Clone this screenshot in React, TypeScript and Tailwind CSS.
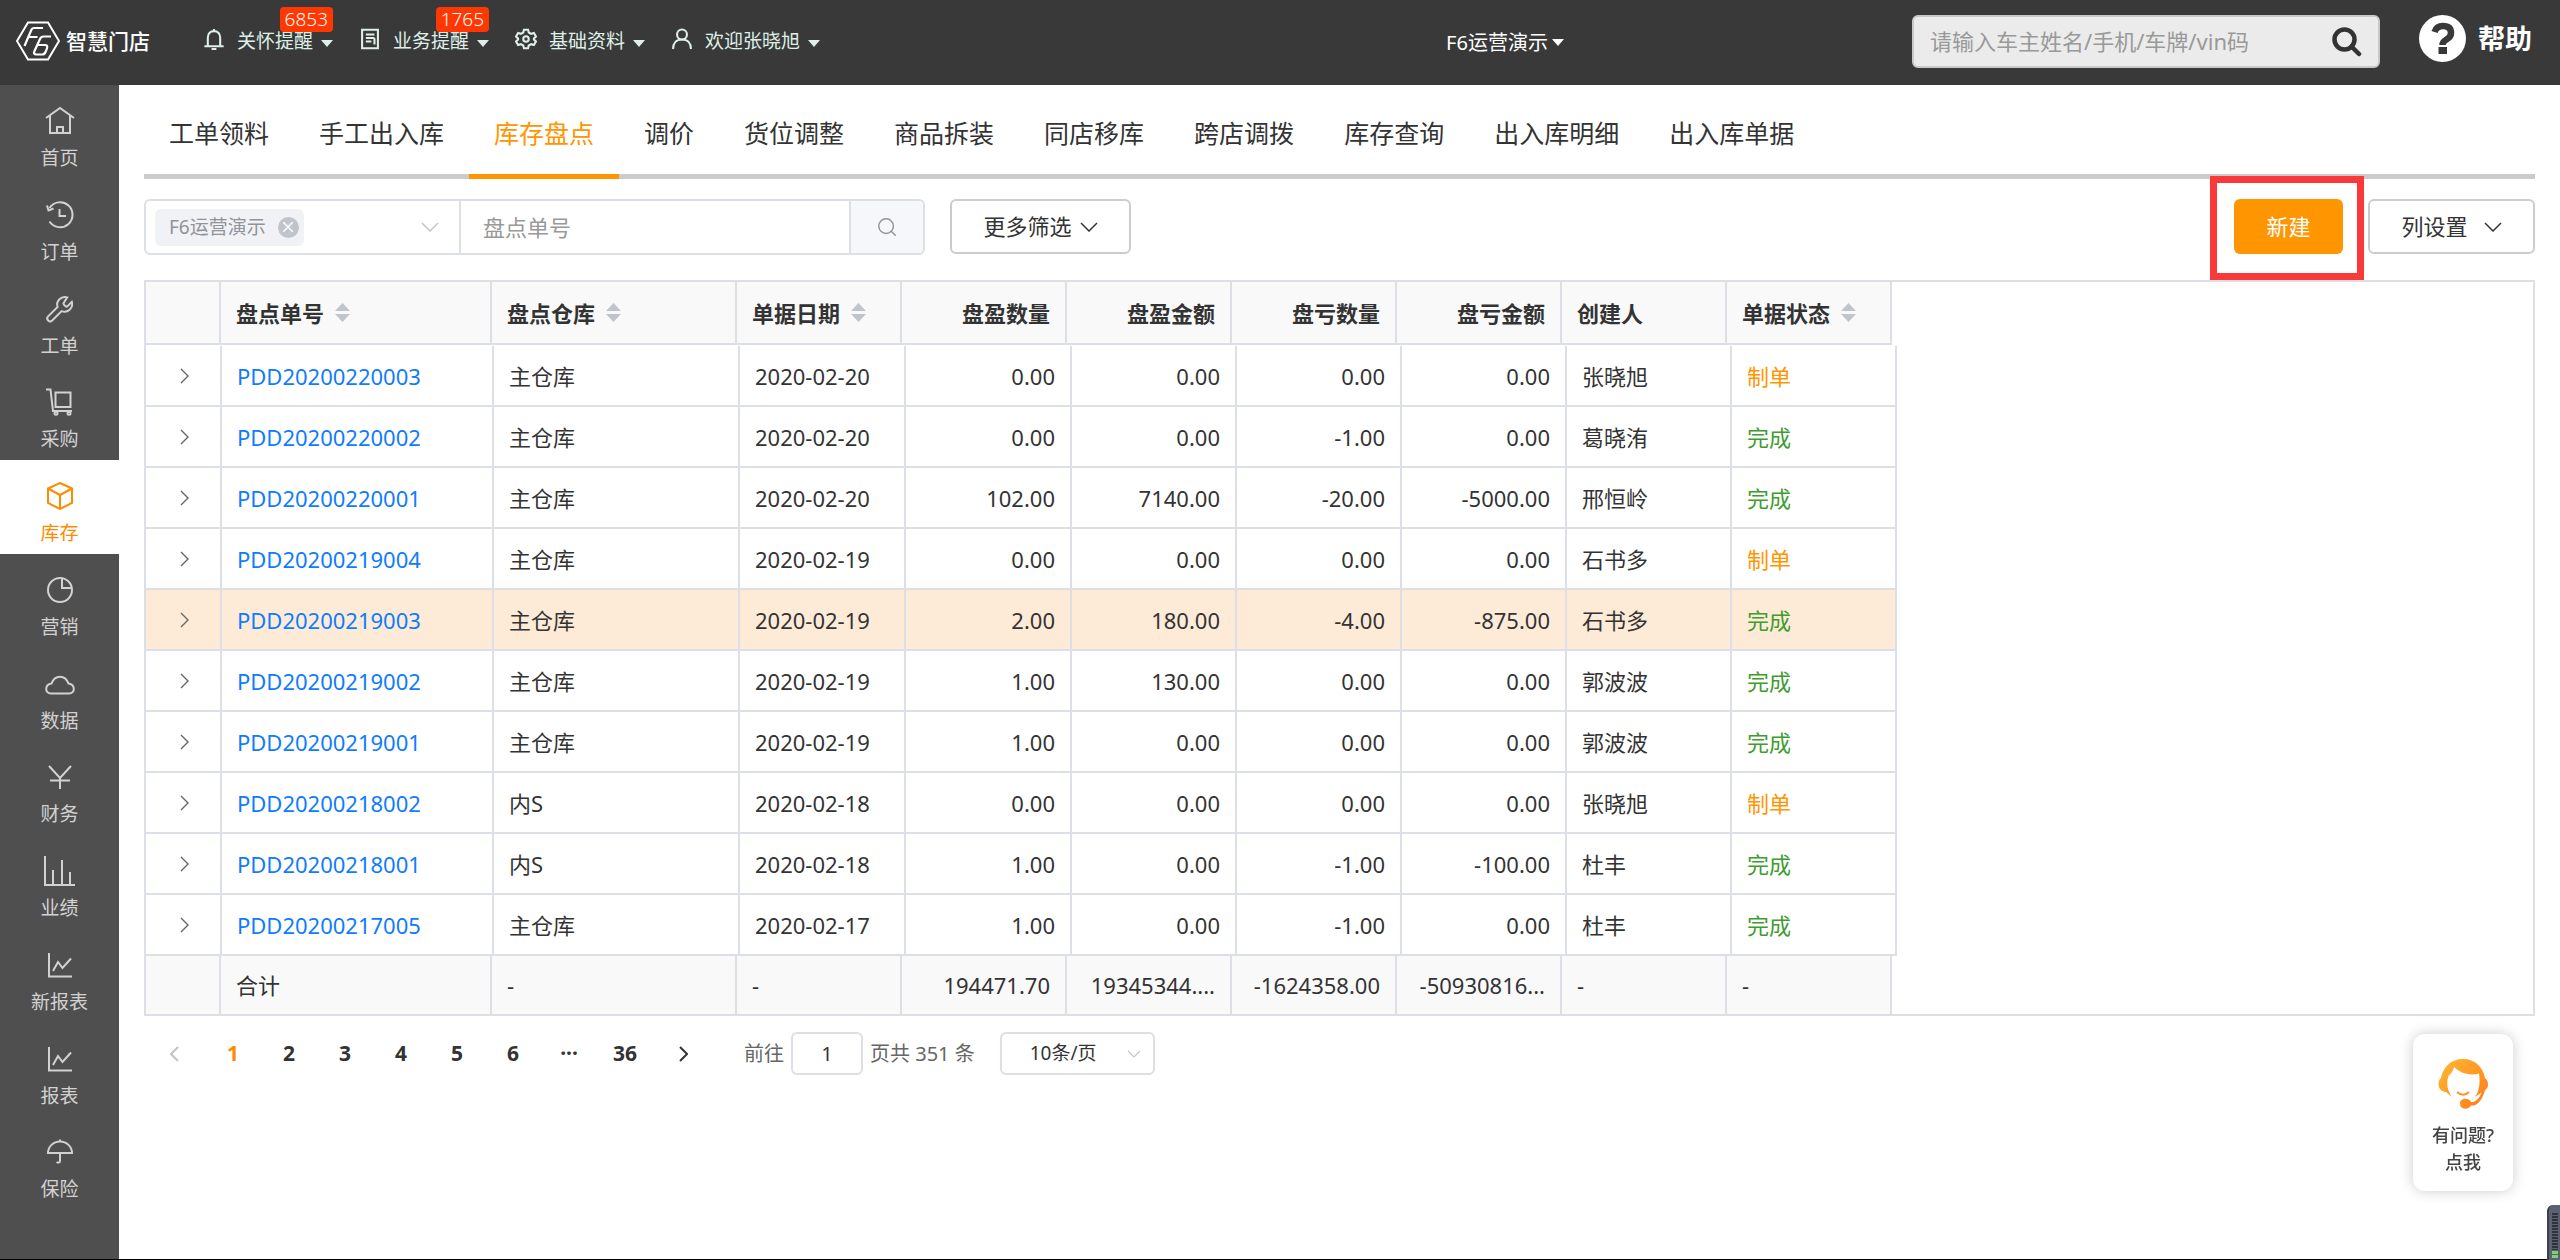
import clsx from "clsx";
import { Search } from "lucide-react";
import { useState } from "react";
import type { ReactNode } from "react";

const topMenus = [
  { icon: "bell", label: "关怀提醒", badge: "6853" },
  { icon: "doc", label: "业务提醒", badge: "1765" },
  { icon: "gear", label: "基础资料" },
  { icon: "user", label: "欢迎张晓旭" },
];

const sideMenus = [
  { icon: "home", label: "首页" },
  { icon: "history", label: "订单" },
  { icon: "wrench", label: "工单" },
  { icon: "cart", label: "采购" },
  { icon: "box", label: "库存" },
  { icon: "pie", label: "营销" },
  { icon: "cloud", label: "数据" },
  { icon: "yen", label: "财务" },
  { icon: "bars", label: "业绩" },
  { icon: "trend", label: "新报表" },
  { icon: "trend", label: "报表" },
  { icon: "umbrella", label: "保险" },
];

const tabs = [
  "工单领料",
  "手工出入库",
  "库存盘点",
  "调价",
  "货位调整",
  "商品拆装",
  "同店移库",
  "跨店调拨",
  "库存查询",
  "出入库明细",
  "出入库单据",
];

const columns = [
  { title: "盘点单号", sortable: true },
  { title: "盘点仓库", sortable: true },
  { title: "单据日期", sortable: true },
  { title: "盘盈数量", right: true },
  { title: "盘盈金额", right: true },
  { title: "盘亏数量", right: true },
  { title: "盘亏金额", right: true },
  { title: "创建人" },
  { title: "单据状态", sortable: true },
];

const rows = [
  ["PDD20200220003", "主仓库", "2020-02-20", "0.00", "0.00", "0.00", "0.00", "张晓旭", "制单"],
  ["PDD20200220002", "主仓库", "2020-02-20", "0.00", "0.00", "-1.00", "0.00", "葛晓洧", "完成"],
  ["PDD20200220001", "主仓库", "2020-02-20", "102.00", "7140.00", "-20.00", "-5000.00", "邢恒岭", "完成"],
  ["PDD20200219004", "主仓库", "2020-02-19", "0.00", "0.00", "0.00", "0.00", "石书多", "制单"],
  ["PDD20200219003", "主仓库", "2020-02-19", "2.00", "180.00", "-4.00", "-875.00", "石书多", "完成"],
  ["PDD20200219002", "主仓库", "2020-02-19", "1.00", "130.00", "0.00", "0.00", "郭波波", "完成"],
  ["PDD20200219001", "主仓库", "2020-02-19", "1.00", "0.00", "0.00", "0.00", "郭波波", "完成"],
  ["PDD20200218002", "内S", "2020-02-18", "0.00", "0.00", "0.00", "0.00", "张晓旭", "制单"],
  ["PDD20200218001", "内S", "2020-02-18", "1.00", "0.00", "-1.00", "-100.00", "杜丰", "完成"],
  ["PDD20200217005", "主仓库", "2020-02-17", "1.00", "0.00", "-1.00", "0.00", "杜丰", "完成"],
];

const totals = ["合计", "-", "-", "194471.70", "19345344....", "-1624358.00", "-50930816...", "-", "-"];

const pages = ["1", "2", "3", "4", "5", "6", "···", "36"];

const shapes: Record<string, ReactNode> = {
  home: <path d="M2 13 L16 3 L30 13 M6 10.5 V28 H26 V10.5 M13 28 V22 H19 V28" />,
  history: (
    <>
      <path d="M5.5 9 A12.5 12.5 0 1 1 5.5 22.5" />
      <path d="M3 6.5 L4.5 11.5 L9.5 9.5" />
      <path d="M15.5 10 V17 H22" />
    </>
  ),
  wrench: (
    <path d="M20 9.5 a1.6 1.6 0 0 0 0 2.2 l1.4 1.4 a1.6 1.6 0 0 0 2.2 0 l4.2-4.2 a7.6 7.6 0 0 1-10.2 9.2 L8.2 27.5 a2.9 2.9 0 0 1-4.1-4.1 L13.6 14 a7.6 7.6 0 0 1 9.6-9.6z" />
  ),
  cart: (
    <>
      <path d="M2 3.5 H6.5 L9 25 H28" />
      <path d="M11.5 6.5 H26.5 V21 H11.5z" />
      <circle cx="12" cy="27.3" r="1.5" />
      <circle cx="25" cy="27.3" r="1.5" />
    </>
  ),
  box: <path d="M16 3 L28 8.5 V23 L16 29 L4 23 V8.5z M4 8.5 L16 15 L28 8.5 M16 15 V29" />,
  pie: (
    <>
      <circle cx="16" cy="16" r="12" />
      <path d="M18 4.5 V14 H28" />
    </>
  ),
  cloud: <path d="M7 25.5 C0.500 25.5 0.500 16.5 7.500 15.500 C11 6.5 21 6.5 24.500 15.500 C31.500 16.5 31.500 25.5 25 25.5z" />,
  yen: <path d="M5 5 L16 17 L27 5 M16 17 V28 M6 19.5 H26" />,
  bars: <path d="M1 1 V30 H31 M9 15 V30 M18 5 V30 M26 17 V30" />,
  trend: <path d="M5 4 V27.5 H28 M9 22 L14 13 L18.5 19 L27 9.5" />,
  umbrella: <path d="M4 17 A12 11.5 0 0 1 28 17z M16 3.5 V5.5 M16 17 V25 A1.7 1.7 0 0 1 12.8 25.8" />,
  bell: <path d="M16 1.5 V4 M7 26 V14 C7 8 11 4.5 16 4.5 C21 4.5 25 8 25 14 V26 M2 26.5 H30 M12.5 30.5 H19.5" />,
  doc: <path d="M4.5 2.5 H27.5 V29.5 H4.5z M10 9.5 H22.5 M10 14.5 H22.5 M10 19.5 H18 M22.5 15 V24" />,
  gear: (
    <>
      <path d="M13 2.5 h6 l1 4 3.5 2 4-1.2 3 5.2-3 2.8 v1.4 l3 2.8-3 5.2-4-1.2-3.5 2-1 4 h-6 l-1-4-3.5-2-4 1.2-3-5.2 3-2.8 v-1.4 l-3-2.8 3-5.2 4 1.2 3.5-2z" />
      <circle cx="16" cy="16" r="4" />
    </>
  ),
  user: (
    <>
      <circle cx="16" cy="9.5" r="7.2" />
      <path d="M3 30.5 C3 22 8 16.7 16 16.7 C24 16.7 29 22 29 30.5" />
    </>
  ),
};

function Icon({ name, className }: { name: string; className: string }) {
  return (
    <svg viewBox="0 0 32 32" fill="none" stroke="currentColor" className={className} aria-hidden="true">
      {shapes[name]}
    </svg>
  );
}

function Caret() {
  return (
    <svg viewBox="0 0 12 7" className="h-[7px] w-3 fill-current" aria-hidden="true">
      <path d="M0 0 H12 L6 7z" />
    </svg>
  );
}

function Chevron({ className }: { className?: string }) {
  return (
    <svg viewBox="0 0 18 10" fill="none" stroke="currentColor" className={clsx("h-[10px] w-[18px]", className)} aria-hidden="true">
      <path d="M1 1 L9 9 L17 1" strokeWidth="1.5" />
    </svg>
  );
}

function SideArrow({ left, bold }: { left?: boolean; bold?: boolean }) {
  return (
    <svg viewBox="0 0 9 16" fill="none" stroke="currentColor" className="h-4 w-[9px]" aria-hidden="true">
      <path d={left ? "M8 1 L1 8 L8 15" : "M1 1 L8 8 L1 15"} strokeWidth={bold ? 2 : 1.4} />
    </svg>
  );
}

function Logo() {
  return (
    <a href="#" className="flex items-center gap-1.5 text-white">
      <svg viewBox="0 0 44 40" fill="none" stroke="currentColor" className="h-10 w-11" aria-hidden="true">
        <path d="M12 1.5 H32 L43 20 L32 38.5 H12 L1 20z" strokeWidth="2" />
        <path d="M8.5 25 L15.5 8.5 Q16.3 7 18 7 H27 M12 16 H21.5" strokeWidth="2.2" />
        <path d="M35 15.5 H27.5 Q25 15.5 24 18 L18.5 30 Q17 33.5 20.5 33.5 H26 Q28.5 33.5 29.5 31 L31 27.5 Q32 24 29 24 H22" strokeWidth="2.2" />
      </svg>
      <span className="text-[21px] leading-6 font-medium">智慧门店</span>
    </a>
  );
}

function TopBar() {
  return (
    <header className="flex h-[85px] shrink-0 items-start bg-[#393939] text-[#dff0e8]">
      <div className="ml-4 flex h-[82px] w-[187px] items-center">
        <Logo />
      </div>
      <nav className="flex h-[82px] items-center gap-[26px]">
        {topMenus.map((menu) => (
          <button key={menu.label} type="button" className="relative flex items-center">
            <Icon name={menu.icon} className="mr-3 h-[22px] w-[22px] -translate-y-0.5 stroke-[3]" />
            <span className="text-[19px] leading-6">{menu.label}</span>
            <span className="ml-2 pt-1">
              <Caret />
            </span>
            {menu.badge && (
              <span className="absolute right-0 bottom-[21px] rounded bg-[#ff3700] px-[5px] text-[19px] leading-[25px] font-light text-white">
                {menu.badge}
              </span>
            )}
          </button>
        ))}
      </nav>
      <div className="flex h-[85px] flex-1 items-center justify-center">
        <button type="button" className="ml-[278px] flex items-center gap-1 text-xl leading-6 text-white">
          F6运营演示
          <Caret />
        </button>
      </div>
      <form className="mt-[15px] flex h-[53px] w-[468px] items-center rounded-md border-2 border-[#c9c9c9] bg-[#ebebeb] px-4">
        <input
          type="text"
          aria-label="搜索"
          placeholder="请输入车主姓名/手机/车牌/vin码"
          className="min-w-0 flex-1 bg-transparent text-[22px] text-[#333] outline-none placeholder:text-[#999]"
        />
        <button type="button" aria-label="搜索" className="text-[#333]">
          <svg viewBox="0 0 30 30" fill="none" stroke="currentColor" strokeWidth="4.5" className="size-[30px]">
            <circle cx="12.5" cy="12.5" r="10" />
            <path d="M19.5 19.5 L27 27" strokeLinecap="round" />
          </svg>
        </button>
      </form>
      <a href="#" className="mt-[15px] mr-7 ml-[39px] flex items-center gap-3 text-[27px] leading-[47px] font-bold text-white">
        <svg viewBox="0 0 47 47" className="size-[47px]" aria-hidden="true">
          <circle cx="23.5" cy="23.5" r="23.5" fill="#fff" />
          <path d="M15.5 17 Q17.5 11 24 11 Q32 11 32 18 Q32 22 27.5 24.5 Q23.5 26.8 23.5 30" fill="none" stroke="#393939" strokeWidth="6.5" />
          <path d="M19.5 32 H28 V39 H19.5z" fill="#393939" />
        </svg>
        帮助
      </a>
    </header>
  );
}

function SideBar() {
  return (
    <aside className="w-[119px] shrink-0 bg-[#4f4f4f]">
      <nav className="grid h-[1125px] auto-rows-fr">
        {sideMenus.map((menu) => (
          <a
            key={menu.label}
            href="#"
            className={clsx(
              "flex flex-col items-center gap-[9px] pt-5 text-[19px] leading-6",
              menu.label === "库存" ? "bg-white text-[#ff8a00]" : "text-[#d2d2d2]"
            )}
          >
            <Icon name={menu.icon} className="h-8 w-8 stroke-2" />
            {menu.label}
          </a>
        ))}
      </nav>
    </aside>
  );
}

function SortMark() {
  return (
    <svg viewBox="0 0 15 19" className="h-[19px] w-[15px] fill-[#c0c4cc]" aria-hidden="true">
      <path d="M0 8 L7.5 0 L15 8z M0 11 L7.5 19 L15 11z" />
    </svg>
  );
}

function HeadCols() {
  return (
    <colgroup>
      <col className="w-[75px]" />
      <col className="w-[271px]" />
      <col className="w-[245px]" />
      <col className="w-[165px]" span={7} />
    </colgroup>
  );
}

function StockTable() {
  return (
    <div className="mt-[25px] border-2 border-[#dcdfe6] text-[22px] leading-[30px] text-[#333]">
      <table className="w-[1746px] table-fixed border-separate border-spacing-0 bg-[#f9f9fa]">
        <HeadCols />
        <thead>
          <tr className="h-[63px]">
            <th className="border-r-2 border-b-2 border-[#dcdfe6]" />
            {columns.map((col) => (
              <th key={col.title} className="border-r-2 border-b-2 border-[#dcdfe6] px-[15px] font-bold">
                <div className={clsx("flex items-center gap-[11px]", col.right && "justify-end")}>
                  {col.title}
                  {col.sortable && <SortMark />}
                </div>
              </th>
            ))}
          </tr>
        </thead>
      </table>
      <table className="mt-px w-[1751px] table-fixed border-separate border-spacing-0">
        <colgroup>
          <col className="w-[76px]" />
          <col className="w-[272px]" />
          <col className="w-[246px]" />
          <col className="w-[166px]" span={2} />
          <col className="w-[165px]" span={5} />
        </colgroup>
        <tbody>
          {rows.map((row) => (
            <tr key={row[0]} className={clsx("h-[61px]", row[0] === "PDD20200219003" && "bg-[#feebd7]")}>
              <td className="border-r-2 border-b-2 border-[#dcdfe6]">
                <button type="button" aria-label="展开" className="flex w-full justify-center pl-0.5 text-[#666]">
                  <SideArrow />
                </button>
              </td>
              {row.map((cell, i) => (
                <td
                  key={i}
                  className={clsx(
                    "border-r-2 border-b-2 border-[#dcdfe6] px-[15px]",
                    columns[i].right && "text-right",
                    cell === "制单" && "text-[#ff9500]",
                    cell === "完成" && "text-[#3f9c2f]"
                  )}
                >
                  {i === 0 ? (
                    <a href="#" className="text-[#0f7bff]">
                      {cell}
                    </a>
                  ) : (
                    cell
                  )}
                </td>
              ))}
            </tr>
          ))}
        </tbody>
      </table>
      <table className="w-[1746px] table-fixed border-separate border-spacing-0 bg-[#f9f9fa]">
        <HeadCols />
        <tbody>
          <tr className="h-[58px]">
            <td className="border-r-2 border-[#dcdfe6]" />
            {totals.map((cell, i) => (
              <td
                key={i}
                className={clsx("border-r-2 border-[#dcdfe6] px-[15px] whitespace-nowrap", columns[i].right && "text-right")}
              >
                {cell}
              </td>
            ))}
          </tr>
        </tbody>
      </table>
    </div>
  );
}

function FilterBar() {
  return (
    <div className="mt-5 flex h-14 items-start text-[22px] text-[#333]">
      <div className="flex h-14 overflow-hidden rounded-md border-2 border-[#dcdfe6]">
        <div className="flex w-[315px] items-center justify-between border-r-2 border-[#dcdfe6] pr-5 pl-[9px]">
          <span className="flex h-[37px] items-center gap-3 rounded-md bg-[#f0f2f5] pr-[5px] pl-3.5 text-[19px] text-[#909399]">
            F6运营演示
            <button type="button" aria-label="移除" className="flex size-[21px] items-center justify-center rounded-full bg-[#c0c4cc] text-white">
              <svg viewBox="0 0 10 10" stroke="currentColor" strokeWidth="1.5" className="size-[10px]">
                <path d="M0 0 L10 10 M10 0 L0 10" />
              </svg>
            </button>
          </span>
          <button type="button" aria-label="选择门店" className="text-[#c0c4cc]">
            <Chevron />
          </button>
        </div>
        <input
          type="text"
          aria-label="盘点单号"
          placeholder="盘点单号"
          className="w-[388px] px-[22px] outline-none placeholder:text-[#999]"
        />
        <button type="button" aria-label="查询" className="flex w-[74px] items-center justify-center border-l-2 border-[#dcdfe6] bg-[#f5f7fa] text-[#909399]">
          <Search className="size-[22px]" strokeWidth={1.6} />
        </button>
      </div>
      <button type="button" className="ml-[25px] flex h-[55px] w-[181px] items-center justify-center gap-2 rounded-md border-2 border-[#ccc]">
        更多筛选
        <Chevron />
      </button>
      <div className="relative mr-[25px] ml-auto">
        <button type="button" className="h-[55px] w-[109px] rounded-md bg-[#ff9500] text-white">
          新建
        </button>
        <div className="pointer-events-none absolute -top-[23px] -right-[21px] -bottom-[26px] -left-6 border-[7px] border-[#fa3a3a]" />
      </div>
      <button type="button" className="flex h-[55px] w-[167px] items-center justify-center gap-4 rounded-md border-2 border-[#ccc]">
        列设置
        <Chevron />
      </button>
    </div>
  );
}

function Pagination() {
  return (
    <div className="mt-4 flex h-[43px] items-center text-xl text-[#666]">
      <button type="button" aria-label="上一页" className="flex w-[61px] justify-center text-[#c0c4cc]">
        <SideArrow left bold />
      </button>
      {pages.map((page) => (
        <button
          key={page}
          type="button"
          className={clsx("w-14 text-center text-[21px] font-bold", page === "1" ? "text-[#ff8a00]" : "text-[#333]")}
        >
          {page}
        </button>
      ))}
      <button type="button" aria-label="下一页" className="mr-[30px] flex w-[61px] justify-center text-[#333]">
        <SideArrow bold />
      </button>
      <label htmlFor="jump">前往</label>
      <input
        id="jump"
        type="text"
        defaultValue="1"
        className="mx-[7px] h-[43px] w-[72px] rounded-md border-2 border-[#dcdfe6] text-center text-[#333] outline-none"
      />
      <span>页共 351 条</span>
      <div className="relative ml-[25px] text-[#333]">
        <select aria-label="每页条数" className="h-[43px] w-[155px] appearance-none rounded-md border-2 border-[#dcdfe6] bg-white pl-7 text-[19px] outline-none">
          <option>10条/页</option>
          <option>20条/页</option>
        </select>
        <Chevron className="pointer-events-none absolute top-[17px] right-3 scale-75 text-[#c0c4cc]" />
      </div>
    </div>
  );
}

function HelpCard() {
  return (
    <button
      type="button"
      className="fixed right-[47px] bottom-[69px] flex h-[157px] w-[100px] flex-col items-center rounded-xl bg-white pt-[25px] text-lg leading-[27px] font-medium text-[#444] shadow-[0_0_14px_rgba(0,0,0,0.2)]"
    >
      <svg viewBox="0 0 50 50" className="mb-[13px] size-[50px]" aria-hidden="true">
        <defs>
          <linearGradient id="agent" x1="0" y1="0" x2="1" y2="1">
            <stop offset="0" stopColor="#ffb931" />
            <stop offset="1" stopColor="#ff7a1a" />
          </linearGradient>
        </defs>
        <path
          fill="url(#agent)"
          d="M25 0 C37 0 45 8 47 19 C51 22 51 29 47 31 C45 39 41 45 36 46.5 H33 C31 51 22 51 22 44.5 C22 38.5 31 38.5 33 43 H35 C39 42 42 38 43.5 33.5 L37 38 C41 32 42.5 25 41 14.5 C31 17 22 14 16 8 C15 13 12 15 10.5 17 C8 24 9 31 14 38 L8 33 C1 33 -2 24 3 19 C5 8 13 0 25 0z"
        />
        <path d="M19 33 Q25 38.5 31 33" fill="none" stroke="#ff9422" strokeWidth="2" />
      </svg>
      <span>有问题?</span>
      <span>点我</span>
    </button>
  );
}

function CornerMeter() {
  return (
    <div className="fixed right-0 bottom-0 h-[55px] w-[13px] rounded-tl-md border-l-2 border-[#3c404b] bg-[#5b6170] pt-2 pl-[3px]">
      <svg viewBox="0 0 6 46" className="h-[46px] w-1.5" aria-hidden="true">
        <path d="M3 0 V37" stroke="#30333c" strokeWidth="6" strokeDasharray="2 1" />
        <path d="M3 38 V46" stroke="#7ed36b" strokeWidth="6" strokeDasharray="3 1" />
      </svg>
    </div>
  );
}

export default function App() {
  const [activeTab, setActiveTab] = useState("库存盘点");

  return (
    <div className="flex min-h-screen flex-col border-b border-black bg-white font-['Noto_Sans','Noto_Sans_CJK_SC',sans-serif]">
      <TopBar />
      <div className="flex flex-1">
        <SideBar />
        <main className="min-w-0 flex-1 px-[25px]">
          <nav className="flex h-[94px] border-b-[5px] border-[#ccc]">
            {tabs.map((tab) => (
              <button
                key={tab}
                type="button"
                onClick={() => setActiveTab(tab)}
                className={clsx(
                  "-mb-[5px] border-b-[5px] px-[25px] pt-2 text-[25px]",
                  tab === activeTab ? "border-[#ff9500] text-[#ff9500]" : "border-transparent text-[#333]"
                )}
              >
                {tab}
              </button>
            ))}
          </nav>
          <FilterBar />
          <StockTable />
          <Pagination />
        </main>
      </div>
      <HelpCard />
      <CornerMeter />
    </div>
  );
}
